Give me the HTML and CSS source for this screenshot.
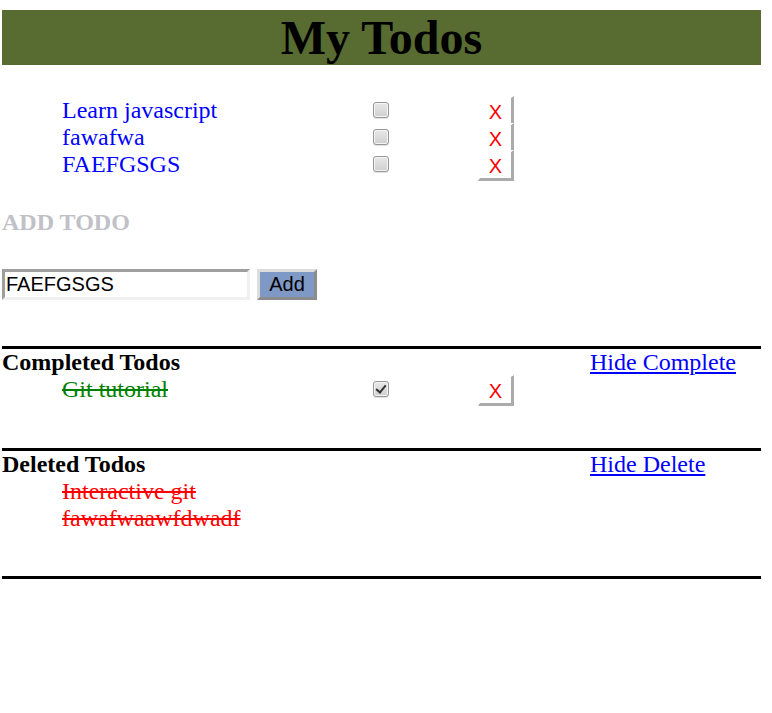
FILE: index.html
```html
<!DOCTYPE html>
<html>
<head>
<meta charset="utf-8">
<title>My Todos</title>
<link rel="stylesheet" href="styles.css">
</head>
<body>
<div class="app">
  <h1 class="title">My Todos</h1>

  <ul class="todos">
    <li class="todo">
      <span class="todo-text open">Learn javascript</span>
      <span class="check-cell"><input type="checkbox" class="check"></span>
      <span class="btn-cell"><button class="del">X</button></span>
    </li>
    <li class="todo">
      <span class="todo-text open">fawafwa</span>
      <span class="check-cell"><input type="checkbox" class="check"></span>
      <span class="btn-cell"><button class="del">X</button></span>
    </li>
    <li class="todo">
      <span class="todo-text open">FAEFGSGS</span>
      <span class="check-cell"><input type="checkbox" class="check"></span>
      <span class="btn-cell"><button class="del">X</button></span>
    </li>
  </ul>

  <h2 class="add-title">ADD TODO</h2>
  <form class="add-form" onsubmit="return false">
    <input type="text" class="add-input" value="FAEFGSGS">
    <button type="button" class="add-btn">Add</button>
  </form>

  <section class="group completed">
    <div class="group-head">
      <h3 class="group-title">Completed Todos</h3>
      <a href="#" class="group-link">Hide Complete</a>
    </div>
    <ul class="todos">
      <li class="todo">
        <span class="todo-text done">Git tutorial</span>
        <span class="check-cell"><input type="checkbox" class="check" checked></span>
        <span class="btn-cell"><button class="del">X</button></span>
      </li>
    </ul>
  </section>

  <section class="group deleted">
    <div class="group-head">
      <h3 class="group-title">Deleted Todos</h3>
      <a href="#" class="group-link">Hide Delete</a>
    </div>
    <ul class="todos">
      <li class="todo"><span class="todo-text removed">Interactive git</span></li>
      <li class="todo"><span class="todo-text removed">fawafwaawfdwadf</span></li>
    </ul>
  </section>
</div>
</body>
</html>
```

FILE: styles.css
```css
html, body {
  margin: 0;
  padding: 0;
  background: #ffffff;
}

body {
  font-family: "Liberation Serif", "Times New Roman", serif;
  font-size: 24px;
  color: #000;
}

.app {
  width: 759px;
  margin-left: 2px;
  padding-top: 10px;
}

.title {
  margin: 0;
  background: #586b31;
  color: #000;
  text-align: center;
  font-size: 48px;
  font-weight: bold;
  line-height: 55px;
  height: 55px;
}

.todos {
  list-style: none;
  margin: 0;
  padding: 0 0 0 60px;
}

.title + .todos {
  margin-top: 32px;
}

.todo {
  display: grid;
  grid-template-columns: 310px 106px 36px;
  align-items: start;
  height: 27px;
  line-height: 27px;
}

.todo-text.open { color: #0000ff; }
.todo-text.done { color: #008000; text-decoration: line-through; }
.todo-text.removed { color: #ff0000; text-decoration: line-through; }

.check-cell {
  display: flex;
  padding-top: 5px;
}

.check {
  appearance: none;
  -webkit-appearance: none;
  margin: 0 0 0 1px;
  width: 16px;
  height: 16px;
  box-sizing: border-box;
  border: 1px solid #979797;
  border-radius: 3px;
  background: linear-gradient(#e8e8e8, #cfcfcf);
  box-shadow: inset 0 0 0 1px #f4f4f4, 0 1px 1px rgba(0,0,0,0.12);
  position: relative;
}

.check:checked::after {
  content: "";
  position: absolute;
  left: 4px;
  top: 1px;
  width: 4px;
  height: 8px;
  border: solid #333;
  border-width: 0 2.5px 2.5px 0;
  transform: rotate(40deg);
}

.btn-cell {
  display: flex;
}

.del {
  width: 36px;
  height: 31px;
  margin: -1px 0 -4px 0;
  padding: 2px 0 0 0;
  box-sizing: border-box;
  background: #ffffff;
  border-style: solid;
  border-width: 2px 3px 3px 2px;
  border-color: #ffffff #ababab #ababab #ffffff;
  color: #ff0000;
  font-family: "Liberation Sans", Arial, sans-serif;
  font-size: 20px;
  line-height: 22px;
  text-align: center;
  cursor: pointer;
}

.add-title {
  margin: 31px 0 0 0;
  font-size: 24px;
  line-height: 27px;
  color: #c0c0c8;
  font-weight: bold;
}

.add-form {
  display: flex;
  gap: 7px;
  margin: 33px 0 0 0;
}

.add-input {
  width: 248px;
  height: 31px;
  box-sizing: border-box;
  margin: 0;
  padding: 0 1px;
  border-style: solid;
  border-width: 3px;
  border-color: #9e9e9e #f0f0f0 #f0f0f0 #9e9e9e;
  font-family: "Liberation Sans", Arial, sans-serif;
  font-size: 20px;
  color: #000;
  background: #fff;
}

.add-btn {
  width: 60px;
  height: 31px;
  box-sizing: border-box;
  margin: 0;
  padding: 0;
  background: #7f99c6;
  border-style: solid;
  border-width: 3px;
  border-color: #dcdcdc #8c8c8c #8c8c8c #dcdcdc;
  font-family: "Liberation Sans", Arial, sans-serif;
  font-size: 20px;
  color: #000;
}

.group {
  border-top: 3px solid #000;
}

.completed {
  margin-top: 46px;
  height: 99px;
}

.deleted {
  height: 125px;
  border-bottom: 3px solid #000;
}

.group-head {
  display: grid;
  grid-template-columns: 588px auto;
  line-height: 27px;
}

.group-title {
  margin: 0;
  font-size: 24px;
  font-weight: bold;
}

.group-link {
  color: #0000ff;
  text-decoration: underline;
}
```
